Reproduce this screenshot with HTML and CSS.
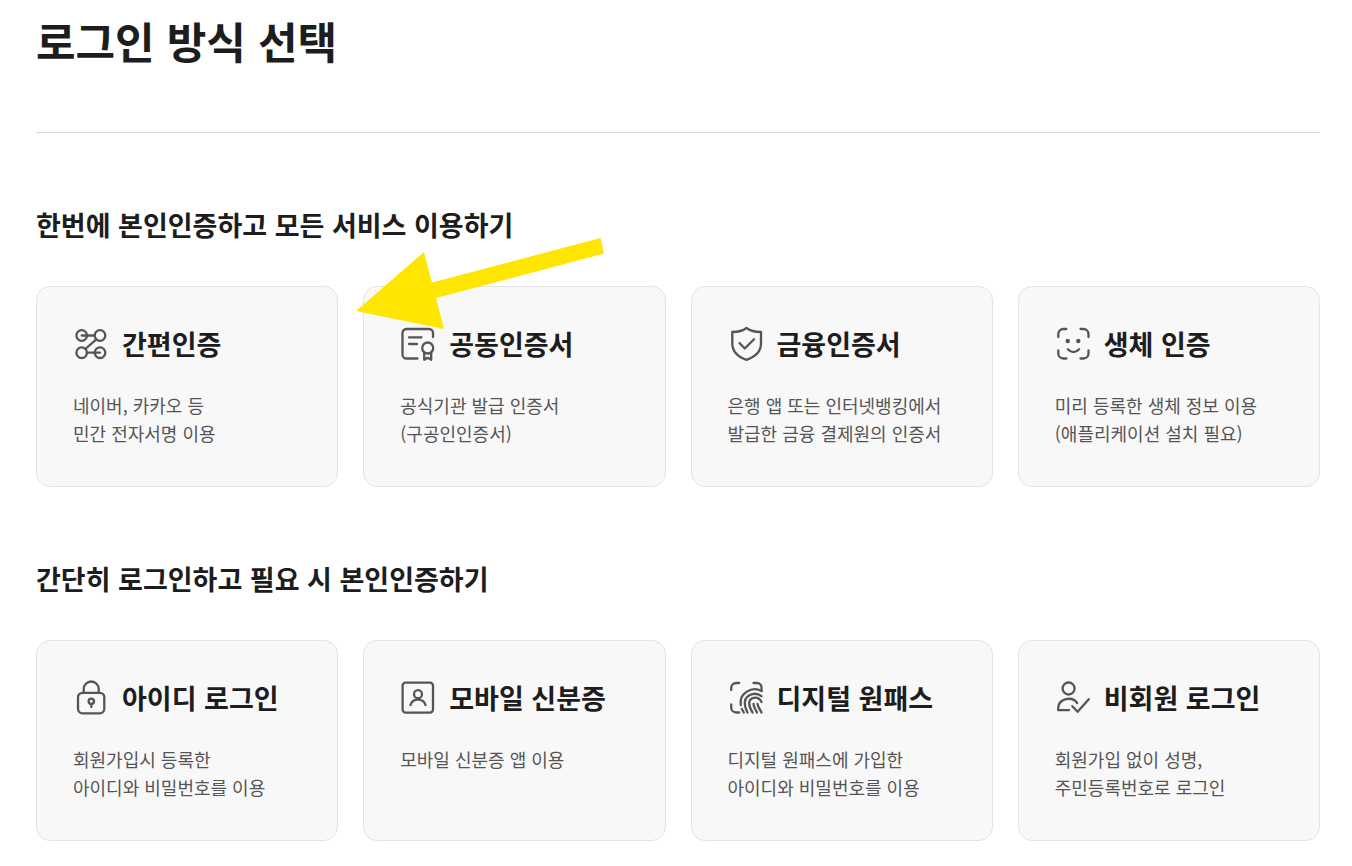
FILE: index.html
```html
<!DOCTYPE html>
<html lang="ko">
<head>
    <meta charset="UTF-8">
    <meta name="viewport" content="width=device-width, initial-scale=1.0">
    <title>로그인 방식 선택</title>
    <link rel="stylesheet" href="styles.css">
</head>
<body>
    <main class="login-page">
        <h1 class="page-title">로그인 방식 선택</h1>

        <section class="login-section">
            <h2 class="section-title">한번에 본인인증하고 모든 서비스 이용하기</h2>
            <div class="card-grid">
                <a href="#" class="card">
                    <h3 class="card-title">
                        <svg class="icon" viewBox="0 0 36 36" aria-hidden="true">
                            <circle cx="8.7" cy="9.5" r="5.3"/>
                            <circle cx="27" cy="9.5" r="5.3"/>
                            <circle cx="8.7" cy="26.7" r="5.3"/>
                            <circle cx="27" cy="26.7" r="5.3"/>
                            <path d="M8.7 9.5H22M23.3 13.4L12.3 23M13.8 26.7H27"/>
                        </svg>
                        간편인증
                    </h3>
                    <p class="card-desc">네이버, 카카오 등<br>민간 전자서명 이용</p>
                </a>
                <a href="#" class="card">
                    <h3 class="card-title">
                        <svg class="icon" viewBox="0 0 36 36" aria-hidden="true">
                            <path d="M33 11V7a4 4 0 0 0-4-4H6.5a4 4 0 0 0-4 4v21.5a4 4 0 0 0 4 4H17.5"/>
                            <path d="M9 11.3h12.5M9 18h8"/>
                            <circle cx="27.7" cy="22" r="5.5"/>
                            <path d="M24.2 27v6.8l3.5-2 3.5 2V27"/>
                        </svg>
                        공동인증서
                    </h3>
                    <p class="card-desc">공식기관 발급 인증서<br>(구공인인증서)</p>
                </a>
                <a href="#" class="card">
                    <h3 class="card-title">
                        <svg class="icon" viewBox="0 0 36 36" aria-hidden="true">
                            <path d="M18.5 2C15 4.8 9.500 6 4.300 6v11.500c0 8 6 13.500 14.200 16.300 8.200-2.800 14.500-8.300 14.500-16.300V6C27.500 6 22 4.800 18.500 2z"/>
                            <path d="M11.5 17l5.300 5.500 9.200-9.200"/>
                        </svg>
                        금융인증서
                    </h3>
                    <p class="card-desc">은행 앱 또는 인터넷뱅킹에서<br>발급한 금융 결제원의 인증서</p>
                </a>
                <a href="#" class="card">
                    <h3 class="card-title">
                        <svg class="icon" viewBox="0 0 36 36" aria-hidden="true">
                            <path d="M3.3 11V8a5 5 0 0 1 5-5h3M25.5 3h3a5 5 0 0 1 5 5v3M33.5 24.5v3a5 5 0 0 1-5 5h-3M11.3 32.5h-3a5 5 0 0 1-5-5v-3"/>
                            <path d="M12.8 23.3c3.3 3.7 8 3.7 11.3 0"/>
                            <circle class="dot" cx="12.7" cy="15" r="2.2"/>
                            <circle class="dot" cx="23.3" cy="15" r="2.2"/>
                        </svg>
                        생체 인증
                    </h3>
                    <p class="card-desc">미리 등록한 생체 정보 이용<br>(애플리케이션 설치 필요)</p>
                </a>
            </div>
            <svg class="arrow" viewBox="0 0 248 91" aria-hidden="true">
                <path d="M0 73L68 14l8 30.5L244.5 0l3.500 15.500L80 60l8 31z"/>
            </svg>
        </section>

        <section class="login-section">
            <h2 class="section-title">간단히 로그인하고 필요 시 본인인증하기</h2>
            <div class="card-grid">
                <a href="#" class="card">
                    <h3 class="card-title">
                        <svg class="icon" viewBox="0 0 36 36" aria-hidden="true">
                            <rect x="5" y="12.8" width="26.3" height="20.5" rx="4.5"/>
                            <path d="M10.7 12.8V9a7.5 7.5 0 0 1 15 0v3.8"/>
                            <circle cx="18.3" cy="21.3" r="2.7"/>
                            <path d="M18.3 24v3"/>
                        </svg>
                        아이디 로그인
                    </h3>
                    <p class="card-desc">회원가입시 등록한<br>아이디와 비밀번호를 이용</p>
                </a>
                <a href="#" class="card">
                    <h3 class="card-title">
                        <svg class="icon" viewBox="0 0 36 36" aria-hidden="true">
                            <rect x="2.6" y="2.6" width="30.4" height="30" rx="3"/>
                            <circle cx="18" cy="14.2" r="4"/>
                            <path d="M10.5 25c2-7.300 13-7.300 15 0"/>
                        </svg>
                        모바일 신분증
                    </h3>
                    <p class="card-desc">모바일 신분증 앱 이용</p>
                </a>
                <a href="#" class="card">
                    <h3 class="card-title">
                        <svg class="icon" viewBox="0 0 36 36" aria-hidden="true">
                            <path d="M3.2 10V8a5 5 0 0 1 5-5h3M25.5 3H29a4.500 4.500 0 0 1 4.500 4.500V11M3.200 24.500v3a5 5 0 0 0 5 5h3"/>
                            <path d="M33.500 11C24 6 11 13 12.800 25M33.500 16.200C26 10.500 15.500 16 17 25c.3 2.800 1.200 5 2.500 7.500M33.500 22c-3.500-7-12.500-4.800-12.300 1.500.1 3.500 1.600 6.200 3.300 9M25.500 24c0 3 2 5.500 3.500 8.500M29.500 24c.5 3 2.500 5.500 4 8.500M13.800 29l2 3.500"/>
                        </svg>
                        디지털 원패스
                    </h3>
                    <p class="card-desc">디지털 원패스에 가입한<br>아이디와 비밀번호를 이용</p>
                </a>
                <a href="#" class="card">
                    <h3 class="card-title">
                        <svg class="icon" viewBox="0 0 36 36" aria-hidden="true">
                            <circle cx="13.6" cy="8.5" r="6"/>
                            <path d="M14 30.2H3.200v-1.500c0-10.500 14-13 19-5.700"/>
                            <path d="M17.3 26.2l5.300 5.600L33.800 19.200"/>
                        </svg>
                        비회원 로그인
                    </h3>
                    <p class="card-desc">회원가입 없이 성명,<br>주민등록번호로 로그인</p>
                </a>
            </div>
        </section>
    </main>
</body>
</html>
```

FILE: styles.css
```css
* {
    box-sizing: border-box;
    margin: 0;
    padding: 0;
}
body {
    font-family: "Noto Sans CJK KR", sans-serif;
    background: #fff;
    color: #1d1d1d;
}
.login-page {
    padding: 10px 32px 26px 36px;
}
.page-title {
    font-size: 43px;
    font-weight: 700;
    line-height: 60px;
    padding-bottom: 62px;
    border-bottom: 1px solid #d8d8d8;
}
.login-section {
    position: relative;
    margin-top: 72px;
}
.section-title {
    font-size: 27px;
    font-weight: 700;
    line-height: 40px;
    margin-bottom: 41px;
}
.card-grid {
    display: grid;
    grid-template-columns: repeat(4, 1fr);
    gap: 25px;
}
.card {
    display: flex;
    flex-direction: column;
    gap: 27px;
    padding: 37px 36px 39px;
    background: #f8f8f8;
    border: 1px solid #e4e4e4;
    border-radius: 14px;
    color: inherit;
    text-decoration: none;
}
.card:hover {
    border-color: #aaa;
}
.card-title {
    display: flex;
    align-items: center;
    gap: 13px;
    font-size: 27px;
    font-weight: 700;
    line-height: 40px;
    white-space: nowrap;
}
.card-desc {
    font-size: 18px;
    line-height: 28px;
    color: #555;
}
.icon {
    flex: none;
    width: 36px;
    height: 36px;
    fill: none;
    stroke: #555;
    stroke-width: 2.3;
    stroke-linecap: round;
    stroke-linejoin: round;
}
.icon .dot {
    fill: #555;
    stroke: none;
}
.arrow {
    position: absolute;
    left: 320px;
    top: 33px;
    width: 248px;
    height: 91px;
    fill: #ffe600;
    pointer-events: none;
}
```
